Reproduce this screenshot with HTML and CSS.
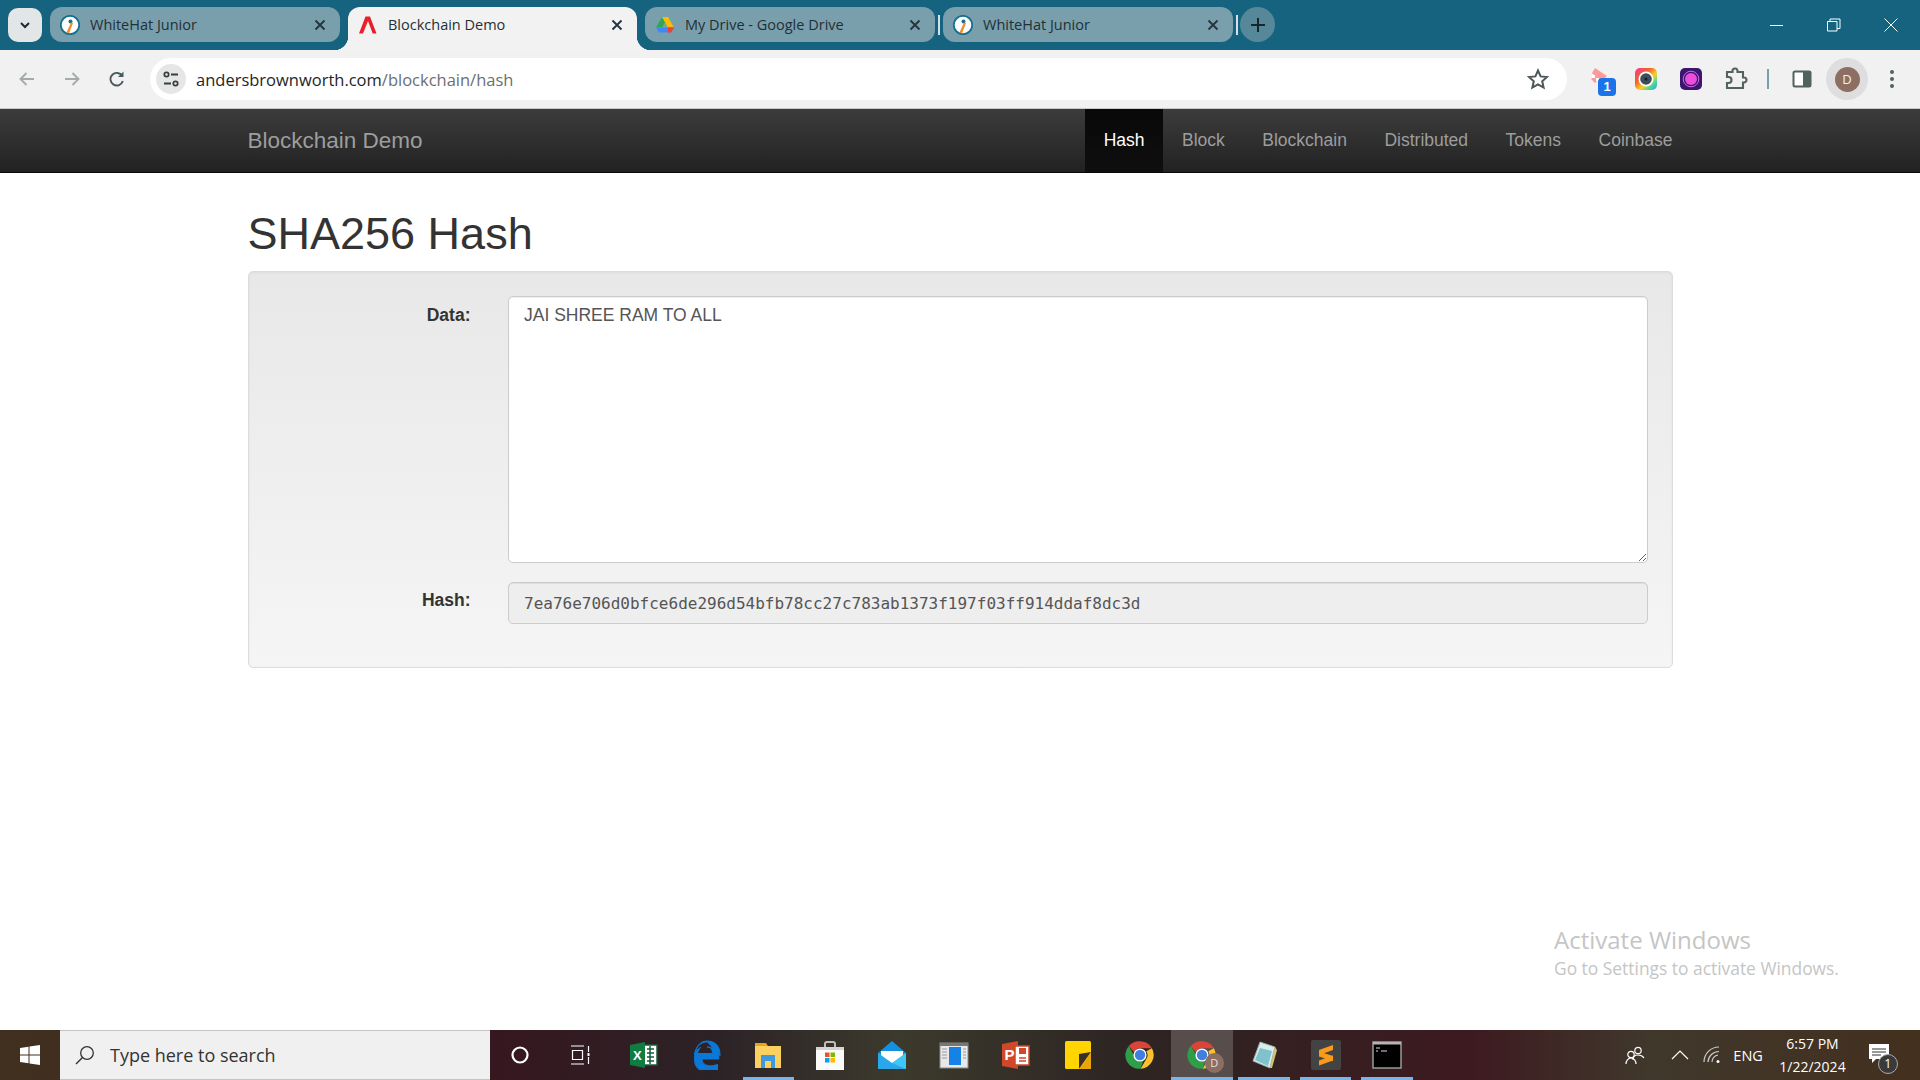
FILE: index.html
```html
<!DOCTYPE html>
<html lang="en">
<head>
<meta charset="utf-8">
<title>Blockchain Demo</title>
<link rel="stylesheet" href="styles.css">
</head>
<body>
<svg class="defs" width="0" height="0" aria-hidden="true">
  <symbol id="wh" viewBox="0 0 20 20">
    <circle cx="10" cy="10" r="9.2" fill="#fff" stroke="#17708c" stroke-width="1.8"/>
    <circle cx="10.5" cy="6.5" r="2" fill="#17708c"/>
    <path d="M11 7.5 L13 8 L9 18.5 L6.5 17.5Z" fill="#f28c28"/>
  </symbol>
  <symbol id="x" viewBox="0 0 16 16"><path d="M3.5 3.5 12.5 12.5M12.5 3.5 3.5 12.5" stroke="#24363d" stroke-width="1.9" fill="none"/></symbol>
  <symbol id="chrome" viewBox="0 0 48 48">
    <path d="M24 2a22 22 0 0 1 19.05 11H24a11 11 0 0 0-9.9 6.2L6 9.6A22 22 0 0 1 24 2z" fill="#db4437"/>
    <path d="M43.05 13A22 22 0 0 1 25 46l9-15.5A11 11 0 0 0 34 18z" fill="#fbc02d"/>
    <path d="M6 9.6l8.9 15.6A11 11 0 0 0 29 34L25 46A22 22 0 0 1 6 9.6z" fill="#2e9e48"/>
    <circle cx="24" cy="24" r="10.5" fill="#fff"/><circle cx="24" cy="24" r="8.3" fill="#3f7fe0"/>
  </symbol>
</svg>

<header class="tabstrip">
  <div class="tab-search"><svg class="ico-12" viewBox="0 0 12 12"><path d="M2 4l4 4 4-4" fill="none" stroke="#1d2b30" stroke-width="2"/></svg></div>
  <div class="tab">
    <svg class="favicon"><use href="#wh"/></svg><span class="tab-title">WhiteHat Junior</span><svg class="tab-close"><use href="#x"/></svg>
  </div>
  <div class="tab tab-active">
    <svg class="favicon" viewBox="0 0 20 20"><path d="M1 18.5 7.500 1.500h4.500l6.500 17h-3.800L10 6 5 18.500z" fill="#e8202a"/></svg><span class="tab-title">Blockchain Demo</span><svg class="tab-close"><use href="#x"/></svg>
  </div>
  <div class="tab">
    <svg class="favicon" viewBox="0 0 20 20"><path d="M7 2h6l-6 10.500H1z" fill="#2da94f"/><path d="M7 2h6l6 10.500h-6z" fill="#fbbc04"/><path d="M1 12.500h18l-3 5H4z" fill="#4285f4"/><path d="M13 12.500h6l-3 5h-3z" fill="#ea4335"/></svg><span class="tab-title">My Drive - Google Drive</span><svg class="tab-close"><use href="#x"/></svg>
  </div>
  <span class="tab-sep"></span>
  <div class="tab">
    <svg class="favicon"><use href="#wh"/></svg><span class="tab-title">WhiteHat Junior</span><svg class="tab-close"><use href="#x"/></svg>
  </div>
  <span class="tab-sep"></span>
  <div class="tab-new"><svg class="ico-14" viewBox="0 0 14 14"><path d="M7 0v14M0 7h14" stroke="#17262c" stroke-width="2"/></svg></div>
  <div class="win-controls">
    <svg class="win-ico" viewBox="0 0 14 14"><path d="M0 7.500h13" stroke="#fff" stroke-width="1"/></svg>
    <svg class="win-ico" viewBox="0 0 14 14"><path d="M.5 3.500h9.500v9.500H.5zM3 3.500V1h10v9.500h-3" fill="none" stroke="#fff" stroke-width="1"/></svg>
    <svg class="win-ico" viewBox="0 0 14 14"><path d="M.5.500l13 13M13.500.500l-13 13" stroke="#fff" stroke-width="1"/></svg>
  </div>
</header>

<div class="toolbar">
  <div class="nav-btns">
    <svg class="tb-ico" viewBox="0 0 20 20"><path d="M17 10H4M9.500 4 3.500 10l6 6" fill="none" stroke="#a3abad" stroke-width="1.900"/></svg>
    <svg class="tb-ico" viewBox="0 0 20 20"><path d="M3 10h13M10.500 4l6 6-6 6" fill="none" stroke="#a3abad" stroke-width="1.900"/></svg>
    <svg class="tb-ico" viewBox="0 0 20 20"><path d="M15.800 12a6.300 6.300 0 1 1-.6-5" fill="none" stroke="#47595d" stroke-width="1.900"/><path d="M16.500 2.500v5.500h-5.500z" fill="#47595d"/></svg>
  </div>
  <div class="omnibox">
    <span class="site-settings"><svg class="ico-18" viewBox="0 0 18 18"><circle cx="4.500" cy="4.500" r="2.200" fill="none" stroke="#33403f" stroke-width="1.700"/><path d="M9 4.500h7M2 13.500h7" stroke="#33403f" stroke-width="1.800"/><circle cx="13.500" cy="13.500" r="2.200" fill="none" stroke="#33403f" stroke-width="1.700"/></svg></span>
    <span class="url"><span class="url-host">andersbrownworth.com</span>/blockchain/hash</span>
    <svg class="star" viewBox="0 0 22 22"><path d="M11 2.500l2.600 5.900 6.400.6-4.800 4.300 1.400 6.300L11 16.400l-5.600 3.200 1.400-6.300L2 9l6.400-.6z" fill="none" stroke="#4d5759" stroke-width="2"/></svg>
  </div>
  <div class="extensions">
    <span class="ext ext-badge">
      <svg class="ext-ico" viewBox="0 0 24 24"><path d="M6 1l12 8-5 5-4-1-3 3-4-4 4-3-3-3z" fill="#ff9a9a"/><path d="M3 8h3v3H3zM7 11h3v3H7z" fill="#fff"/></svg>
      <span class="badge">1</span>
    </span>
    <span class="ext">
      <svg class="ext-ico" viewBox="0 0 24 24"><defs><linearGradient id="rb" x1="0" y1="0" x2="1" y2="1"><stop offset="0" stop-color="#f0379c"/><stop offset=".35" stop-color="#f4622b"/><stop offset=".6" stop-color="#f6d32a"/><stop offset=".8" stop-color="#3ed8a0"/><stop offset="1" stop-color="#4d8df5"/></linearGradient></defs><rect x="1" y="1" width="22" height="22" rx="5" fill="url(#rb)"/><circle cx="12" cy="12" r="7.500" fill="#fff"/><circle cx="12" cy="12" r="5.800" fill="#3c4d5c"/><circle cx="12" cy="12" r="1.500" fill="#16202a"/></svg>
    </span>
    <span class="ext">
      <svg class="ext-ico" viewBox="0 0 24 24"><rect x="1" y="1" width="22" height="22" rx="5" fill="#3b1570"/><circle cx="12" cy="12" r="7.800" fill="none" stroke="#c96ee0" stroke-width="1"/><circle cx="12" cy="12" r="6" fill="#ec4ddb"/></svg>
    </span>
    <span class="ext">
      <svg class="ext-ico" viewBox="0 0 24 24"><path d="M3 5h5.500V4a2.500 2.500 0 0 1 5 0v1H19v5.500h1a2.500 2.500 0 0 1 0 5h-1V21H3v-5h1.500a3 3 0 0 0 0-6H3z" fill="none" stroke="#51625f" stroke-width="2.100"/></svg>
    </span>
    <span class="tb-sep"></span>
    <span class="ext ext-last">
      <svg class="ext-ico" viewBox="0 0 24 24"><rect x="3.500" y="4.500" width="17" height="15" rx="1.500" fill="#fff" stroke="#51625f" stroke-width="2"/><rect x="13" y="4" width="8" height="16" fill="#51625f"/></svg>
    </span>
    <span class="avatar-wrap"><span class="avatar">D</span></span>
    <span class="menu-dots"><i></i><i></i><i></i></span>
  </div>
</div>

<main class="page">
  <nav class="navbar">
    <div class="navbar-inner">
      <a class="brand">Blockchain Demo</a>
      <ul class="nav-list">
        <li class="nav-item active">Hash</li>
        <li class="nav-item">Block</li>
        <li class="nav-item">Blockchain</li>
        <li class="nav-item">Distributed</li>
        <li class="nav-item">Tokens</li>
        <li class="nav-item">Coinbase</li>
      </ul>
    </div>
  </nav>
  <div class="container">
    <h1 class="title">SHA256 Hash</h1>
    <form class="well">
      <label class="field-label label-data" for="data">Data:</label>
      <textarea class="field data-field" id="data">JAI SHREE RAM TO ALL</textarea>
      <label class="field-label" for="hash">Hash:</label>
      <input class="field hash-field" id="hash" readonly value="7ea76e706d0bfce6de296d54bfb78cc27c783ab1373f197f03ff914ddaf8dc3d">
    </form>
  </div>
  <div class="activate">
    <div class="activate-title">Activate Windows</div>
    <div class="activate-sub">Go to Settings to activate Windows.</div>
  </div>
</main>

<footer class="taskbar">
  <div class="start"><svg class="win-logo" viewBox="0 0 20 20"><path d="M0 3l8.500-1.200V9.500H0zM9.500 1.600 20 0v9.500H9.500zM0 10.500h8.500v7.700L0 17zM9.500 10.500H20V20L9.500 18.400z" fill="#fff"/></svg></div>
  <div class="search">
    <svg class="search-ico" viewBox="0 0 20 20"><circle cx="12" cy="8" r="6.300" fill="none" stroke="#333" stroke-width="1.300"/><path d="M7.500 12.500 1 19" stroke="#333" stroke-width="1.500"/></svg>
    <span>Type here to search</span>
  </div>
  <div class="task-items">
    <div class="task"><svg class="task-ico nudge" viewBox="0 0 24 24"><circle cx="12" cy="12" r="7.500" fill="none" stroke="#fff" stroke-width="2.200"/></svg></div>
    <div class="task"><svg class="task-ico nudge-more" viewBox="0 0 24 24"><path d="M3 3h13M3 21h13M4.500 7.500h10v9h-10zM20.500 3v6M20.500 14v7" fill="none" stroke="#fff" stroke-width="1.200"/><rect x="19.500" y="10" width="2" height="3" fill="#fff"/></svg></div>
    <div class="task"><svg class="task-ico-lg nudge" viewBox="0 0 30 30"><rect x="9" y="5" width="19" height="20" fill="#fff" stroke="#185c37" stroke-width="1.500"/><path d="M18 9h7M18 13h7M18 17h7M18 21h7M21 6v18" stroke="#185c37" stroke-width="1.500"/><path d="M1 5l15-3v26L1 25z" fill="#107c41"/><text class="glyph-x" x="4" y="20">X</text></svg></div>
    <div class="task"><svg class="task-ico-lg" viewBox="0 0 30 30"><path d="M15 2C8 2 3 8 2.500 15c1-3.500 3-6 6-7.500-1.500 1.500-2.500 3.500-3 6h15c0-4-2-6.500-5.500-6.500 6 0 12 3 12 12H10c0 5 5 9 15.500 5.500v6c-11 4-23 1-23-11C2.500 7 8 1 15 1c8 0 13.500 5 13 15" fill="#0a78d7" stroke="#0a78d7"/></svg></div>
    <div class="task running"><svg class="task-ico-lg nudge" viewBox="0 0 30 30"><path d="M2 3h11l2 3H2z" fill="#e8a317"/><path d="M2 6h26v22H2z" fill="#fcd05f"/><path d="M8 28V15h14v13h-4v-7h-6v7z" fill="#3d9ae0"/></svg></div>
    <div class="task"><svg class="task-ico-lg" viewBox="0 0 30 30"><path d="M10 9V4a2 2 0 0 1 2-2h6a2 2 0 0 1 2 2v5" fill="none" stroke="#bdbdbd" stroke-width="2"/><path d="M1 7h28v23H1z" fill="#fafafa"/><path d="M1 7h28v3H1z" fill="#d5d5d5"/><rect x="10" y="12.500" width="4.500" height="4.500" fill="#f25022"/><rect x="15.500" y="12.500" width="4.500" height="4.500" fill="#7fba00"/><rect x="10" y="18" width="4.500" height="4.500" fill="#00a4ef"/><rect x="15.500" y="18" width="4.500" height="4.500" fill="#ffb900"/></svg></div>
    <div class="task"><svg class="task-ico-lg" viewBox="0 0 30 30"><path d="M1 13 15 1l14 12v16H1z" fill="#1490df"/><path d="M4 11h22v8l-11 7-11-7z" fill="#fff"/><path d="M1 29V13l14 10 14-10v16z" fill="#28a8ea"/><path d="M15 23 29 13v16z" fill="#50d9ff" opacity=".6"/></svg></div>
    <div class="task"><svg class="task-ico-lg" viewBox="0 0 30 30"><rect x="1" y="3" width="28" height="25" fill="#e8e8e8" stroke="#8b8b8b"/><path d="M1 3h28v3H1z" fill="#777"/><path d="M10 7h12v18H10z" fill="#1782e6"/><path d="M3 9h5M3 12h5M3 15h5M3 18h5M24 9h3M24 12h3M24 15h3M24 18h3" stroke="#9a9a9a" stroke-width="1.200"/></svg></div>
    <div class="task"><svg class="task-ico-lg" viewBox="0 0 30 30"><path d="M1 4 17 1v28L1 26z" fill="#d0472a"/><path d="M14 6h14v19H14z" fill="#fff" stroke="#d0472a" stroke-width="1.500"/><path d="M18 8h7v6h-7z" fill="#d0472a"/><path d="M18 18h7M18 21h7" stroke="#d0472a" stroke-width="1.500"/><text class="glyph-p" x="3.500" y="20">P</text></svg></div>
    <div class="task"><svg class="task-ico-lg" viewBox="0 0 30 30"><rect x="2" y="1" width="26" height="28" rx="1.500" fill="#ffd400"/><path d="M28 12 16 14v15z" fill="#3a3126"/><path d="M28 12 16 29h11a1 1 0 0 0 1-1z" fill="#e8a50c"/></svg></div>
    <div class="task"><svg class="task-ico-lg" viewBox="0 0 48 48"><use href="#chrome"/></svg></div>
    <div class="task active-task">
      <svg class="task-ico-lg" viewBox="0 0 48 48"><use href="#chrome"/></svg>
      <span class="task-avatar">D</span>
    </div>
    <div class="task running"><svg class="task-ico-lg" viewBox="0 0 30 30"><path d="M11 2l15 5-5 21-17-7z" fill="#d8eeea" stroke="#9ba8a8"/><path d="M11 8 23 11l-4 15-13-6z" fill="#7fc2cc"/><path d="M26 7l2 3-5 18h-2z" fill="#d1c476"/></svg></div>
    <div class="task running"><svg class="task-ico-lg" viewBox="0 0 30 30"><rect x="0" y="0" width="30" height="30" rx="2" fill="#434343"/><path d="M22 5v5L8 15v-5zM8 11.500l14 4.500v5L8 16.500zM22 15.500v5L8 25.500v-5z" fill="#f89b1c"/></svg></div>
    <div class="task running"><svg class="task-ico-lg" viewBox="0 0 30 30"><rect x="1" y="2" width="28" height="26" fill="#000" stroke="#9a9a9a" stroke-width="1.500"/><path d="M1 2h28v2.500H1z" fill="#b5b5b5"/><path d="M4 8h4M4 11h2M9 11h6" stroke="#ddd" stroke-width="1"/></svg></div>
  </div>
  <div class="tray">
    <svg class="tray-ico" viewBox="0 0 20 20"><circle cx="13" cy="5.500" r="3.200" fill="none" stroke="#fff" stroke-width="1.200"/><path d="M8 15c0-3 2-5 5-5s5 1.500 6 3" fill="none" stroke="#fff" stroke-width="1.200"/><circle cx="6" cy="9.500" r="3.200" fill="none" stroke="#fff" stroke-width="1.200"/><path d="M1 19c0-3 2-6 5-6s5 3 5 6" fill="none" stroke="#fff" stroke-width="1.200"/></svg>
    <svg class="tray-chev" viewBox="0 0 18 12"><path d="M1 10l8-8 8 8" fill="none" stroke="#fff" stroke-width="1.200"/></svg>
    <svg class="tray-ico tray-wifi" viewBox="0 0 20 20"><path d="M2 17A15 15 0 0 1 17 2M6 17A11 11 0 0 1 17 6.500M10 17a7 7 0 0 1 6-7" fill="none" stroke="#ccc" stroke-width="1.200"/><circle cx="16" cy="16.500" r="1.500" fill="#fff"/></svg>
    <span class="lang">ENG</span>
    <div class="clock"><div>6:57 PM</div><div>1/22/2024</div></div>
    <div class="notif">
      <svg class="notif-ico" viewBox="0 0 20 20"><path d="M0 0h20v15H7l-4 4v-4H0z" fill="#fff"/><path d="M3 5h14M3 8h14M3 11h9" stroke="#333" stroke-width="1.200"/></svg>
      <span class="notif-count">1</span>
    </div>
  </div>
</footer>
</body>
</html>
```
FILE: styles.css
```css
* { box-sizing: border-box; }
html, body { margin: 0; padding: 0; height: 100%; overflow: hidden; }
body {
  display: flex;
  flex-direction: column;
  width: 1920px;
  height: 1080px;
  font-family: "Liberation Sans", Arial, sans-serif;
  background: #fff;
}
.defs { position: absolute; }

/* Tab strip */
.tabstrip {
  flex: 0 0 50px;
  display: flex;
  align-items: flex-start;
  padding: 7px 0 0 8px;
  background: #15637f;
  font-family: "Open Sans", sans-serif;
}
.tab-search {
  flex: 0 0 34px;
  height: 34px;
  margin: 1px 8px 0 0;
  display: flex;
  align-items: center;
  justify-content: center;
  background: #e3e6e7;
  border-radius: 10px;
}
.ico-12 { width: 12px; height: 12px; }
.ico-14 { width: 14px; height: 14px; }
.ico-18 { width: 18px; height: 18px; }
.tab {
  position: relative;
  flex: 0 0 290px;
  height: 35px;
  display: flex;
  align-items: center;
  gap: 10px;
  padding: 0 12px 0 10px;
  background: #7a9fac;
  border-radius: 12px;
  color: #1f3036;
}
.tab-active {
  height: 43px;
  padding-bottom: 8px;
  margin: 0 8px 0 8px;
  flex-basis: 289px;
  background: #f2f2f2;
  border-radius: 12px 12px 0 0;
}
.tab-active::before,
.tab-active::after {
  content: "";
  position: absolute;
  bottom: 0;
  width: 14px;
  height: 14px;
}
.tab-active::before {
  left: -14px;
  background: radial-gradient(circle at 0 0, transparent 14px, #f2f2f2 14.5px);
}
.tab-active::after {
  right: -14px;
  background: radial-gradient(circle at 100% 0, transparent 14px, #f2f2f2 14.5px);
}
.favicon { flex: 0 0 20px; width: 20px; height: 20px; }
.tab-title { flex: 1; font-size: 14.5px; white-space: nowrap; }
.tab-close { flex: 0 0 16px; width: 16px; height: 16px; }
.tab-sep {
  flex: 0 0 2px;
  height: 20px;
  margin: 8px 3px 0;
  background: #d6e1e4;
}
.tab-new {
  flex: 0 0 35px;
  height: 35px;
  margin-left: -1px;
  display: flex;
  align-items: center;
  justify-content: center;
  background: #56889a;
  border-radius: 50%;
}
.win-controls {
  margin-left: auto;
  display: flex;
  align-items: center;
  gap: 43px;
  height: 35px;
  padding: 0 22px 0 0;
}
.win-ico { width: 14px; height: 14px; }

/* Toolbar */
.toolbar {
  flex: 0 0 59px;
  display: flex;
  align-items: flex-start;
  padding-top: 8px;
  background: #f1f1f1;
  border-bottom: 1px solid #c9c9c9;
}
.nav-btns {
  flex: 0 0 150px;
  height: 42px;
  display: flex;
  align-items: center;
  gap: 25px;
  padding-left: 17px;
}
.tb-ico { width: 20px; height: 20px; }
.omnibox {
  flex: 0 0 1417px;
  height: 42px;
  display: flex;
  align-items: center;
  padding: 0 18px 0 6px;
  background: #fff;
  border-radius: 21px;
}
.site-settings {
  flex: 0 0 30px;
  height: 30px;
  margin-right: 10px;
  display: flex;
  align-items: center;
  justify-content: center;
  background: #e6e6e6;
  border-radius: 50%;
}
.url {
  flex: 1;
  font-family: "Open Sans", sans-serif;
  font-size: 16.500px;
  color: #6a6f70;
}
.url-host { color: #1f2527; }
.star { width: 22px; height: 22px; }
.extensions {
  flex: 1;
  height: 42px;
  display: flex;
  align-items: center;
  padding-left: 22px;
}
.ext {
  position: relative;
  flex: 0 0 24px;
  height: 24px;
  margin-right: 21px;
}
.ext-last { margin-right: 12px; }
.ext-ico { display: block; width: 24px; height: 24px; }
.badge {
  position: absolute;
  left: 9px;
  top: 11px;
  width: 18px;
  height: 18px;
  border-radius: 4px;
  background: #1a73e8;
  color: #fff;
  font: bold 13px/18px "Liberation Sans", sans-serif;
  text-align: center;
}
.tb-sep {
  flex: 0 0 2px;
  height: 20px;
  margin: 0 21px 0 -2px;
  background: #7a9fac;
}
.avatar-wrap {
  flex: 0 0 42px;
  height: 42px;
  margin-right: 22px;
  display: flex;
  align-items: center;
  justify-content: center;
  background: #dedede;
  border-radius: 50%;
}
.avatar {
  width: 25px;
  height: 25px;
  border-radius: 50%;
  background: #8d6e63;
  color: #f2eeee;
  font: 13px/25px "Open Sans", sans-serif;
  text-align: center;
}
.menu-dots { display: flex; flex-direction: column; gap: 3px; }
.menu-dots i { display: block; width: 4px; height: 4px; border-radius: 50%; background: #51625f; }

/* Page */
.page { position: relative; flex: 1; min-height: 0; background: #fff; }
.navbar {
  height: 64px;
  background: linear-gradient(to bottom, #3c3c3c, #222);
  border-bottom: 1px solid #080808;
}
.navbar-inner {
  width: 1425px;
  height: 100%;
  margin: 0 auto;
  display: flex;
  align-items: center;
  justify-content: space-between;
}
.brand { font-size: 22.5px; color: #9d9d9d; }
.nav-list {
  display: flex;
  height: 100%;
  margin: 0 -18.750px 0 0;
  padding: 0;
  list-style: none;
}
.nav-item {
  display: flex;
  align-items: center;
  padding: 0 18.750px;
  font-size: 17.5px;
  color: #9d9d9d;
}
.nav-item.active {
  color: #fff;
  background: linear-gradient(to bottom, #080808, #0f0f0f);
}
.container { width: 1425px; margin: 0 auto; }
.title {
  margin: 36px 0 12.500px;
  font-size: 45px;
  line-height: 49.500px;
  font-weight: 400;
  color: #333;
}
.well {
  display: grid;
  grid-template-columns: 197px 1fr;
  column-gap: 37px;
  row-gap: 19px;
  height: 397px;
  align-content: start;
  padding: 24px 24px 0 25px;
  background: linear-gradient(to bottom, #e8e8e8, #f5f5f5);
  border: 1px solid #dcdcdc;
  border-radius: 5px;
  box-shadow: inset 0 1px 3px rgba(0,0,0,.05);
}
.field-label {
  padding-top: 6px;
  font-size: 17.5px;
  line-height: 25px;
  font-weight: 700;
  text-align: right;
  color: #333;
}
.label-data { padding-top: 7px; }
.field {
  display: block;
  width: 100%;
  padding: 6px 15.500px;
  border: 1px solid #ccc;
  border-radius: 5px;
  outline: none;
  color: #555;
  box-shadow: inset 0 1px 1px rgba(0,0,0,.075);
}
.data-field {
  height: 267px;
  margin: 0;
  background: #fff;
  font: 17.500px/25px "Liberation Sans", sans-serif;
}
.hash-field {
  height: 42px;
  background: #eee;
  font: 16px "DejaVu Sans Mono", monospace;
}

.activate {
  position: absolute;
  left: 1554px;
  top: 814px;
  color: #c5c5c5;
  font-family: "Open Sans", sans-serif;
}
.activate-title { font-size: 24px; line-height: 33px; }
.activate-sub { font-size: 17.400px; line-height: 24px; }

/* Taskbar */
.taskbar {
  flex: 0 0 50px;
  display: flex;
  align-items: stretch;
  background: linear-gradient(to right, #41301f 0, #3e2a22 180px, #36171f 500px, #2c2327 720px, #3c3a2c 900px, #2d2523 1120px, #3d1a20 1470px, #40382c 1650px, #43301f 1900px);
  color: #fff;
  font-family: "Open Sans", sans-serif;
}
.start {
  flex: 0 0 60px;
  display: flex;
  align-items: center;
  justify-content: center;
}
.win-logo { width: 20px; height: 20px; }
.search {
  flex: 0 0 430px;
  display: flex;
  align-items: center;
  gap: 15px;
  padding-left: 15px;
  background: #f0f0f0;
  border-top: 1px solid #c4c4c4;
  border-bottom: 1px solid #c4c4c4;
  color: #333;
  font-size: 18px;
}
.search-ico { width: 20px; height: 20px; }
.task-items { display: flex; flex: 0 0 auto; }
.task {
  position: relative;
  flex: 0 0 61.900px;
  display: flex;
  align-items: center;
  justify-content: center;
}
.task-ico { width: 24px; height: 24px; }
.task-ico-lg { width: 30px; height: 30px; }
.nudge { margin-right: 2px; }
.nudge-more { margin-right: 6px; }
.task.running::after,
.active-task::after {
  content: "";
  position: absolute;
  left: 5px;
  right: 5px;
  bottom: 0;
  height: 3px;
  background: #77b5ea;
}
.active-task { background: #574e4b; }
.active-task::after { left: 0; right: 0; }
.task-avatar {
  position: absolute;
  left: 34px;
  top: 23px;
  width: 19px;
  height: 20px;
  border-radius: 50%;
  background: #8d6e63;
  color: #e8e0dc;
  font-size: 11px;
  line-height: 20px;
  text-align: center;
}
.glyph-x { font: bold 13px "Liberation Sans", sans-serif; fill: #fff; }
.glyph-p { font: bold 15px "Liberation Sans", sans-serif; fill: #fff; }
.tray {
  flex: 1;
  display: flex;
  align-items: center;
  padding-left: 207px;
}
.tray-ico { flex: 0 0 20px; width: 20px; height: 20px; margin-right: 26px; }
.tray-chev { flex: 0 0 18px; width: 18px; height: 12px; margin-right: 13px; }
.tray-wifi { margin-right: 11px; }
.lang { font-size: 14.500px; margin-right: 14.600px; }
.clock { font-size: 14px; line-height: 23px; text-align: center; width: 70px; margin-right: 21.400px; }
.notif { position: relative; flex: 0 0 30px; height: 30px; }
.notif-ico { position: absolute; left: 0; top: 4px; width: 20px; height: 20px; }
.notif-count {
  position: absolute;
  left: 9px;
  top: 14px;
  width: 20px;
  height: 20px;
  border-radius: 50%;
  background: #3a3a3a;
  border: 1px solid #aaa;
  font-size: 12.500px;
  line-height: 18px;
  text-align: center;
}
```
